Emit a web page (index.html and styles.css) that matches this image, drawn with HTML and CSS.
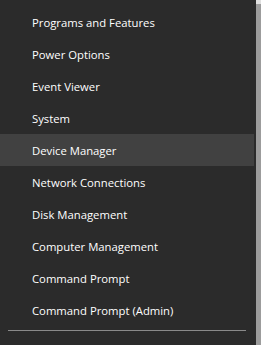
FILE: index.html
```html
<!DOCTYPE html>
<html lang="en">
<head>
    <meta charset="UTF-8">
    <title>Quick Link Menu</title>
    <link rel="stylesheet" href="styles.css">
</head>
<body>
    <div class="screen">
        <div class="menu">
            <div class="menu-item">Programs and Features</div>
            <div class="menu-item">Power Options</div>
            <div class="menu-item">Event Viewer</div>
            <div class="menu-item">System</div>
            <div class="menu-item active">Device Manager</div>
            <div class="menu-item">Network Connections</div>
            <div class="menu-item">Disk Management</div>
            <div class="menu-item">Computer Management</div>
            <div class="menu-item">Command Prompt</div>
            <div class="menu-item">Command Prompt (Admin)</div>
            <div class="separator"></div>
        </div>
        <div class="gap"></div>
        <div class="edge"></div>
    </div>
</body>
</html>
```

FILE: styles.css
```css
html, body {
    margin: 0;
    padding: 0;
    background-color: #2b2b2b;
}

body {
    font-family: "Open Sans", "Noto Sans", Arial, sans-serif;
    width: 261px;
    height: 345px;
    overflow: hidden;
}

.screen {
    display: flex;
    height: 345px;
}

.menu {
    width: 254px;
    padding-top: 6px;
    flex-shrink: 0;
}

.menu-item {
    height: 32px;
    line-height: 34px;
    padding-left: 32px;
    font-size: 11.3px;
    color: #ffffff;
    white-space: nowrap;
}

.menu-item.active {
    background-color: #414141;
}

.separator {
    height: 1px;
    background-color: #8a8a8a;
    margin: 4px 8px 0 8px;
}

.gap {
    width: 2px;
    flex-shrink: 0;
}

.edge {
    flex: 1;
    background: linear-gradient(to bottom, #e0e0e0 0, #e0e0e0 4px, #9c9c9c 4px);
}
```
